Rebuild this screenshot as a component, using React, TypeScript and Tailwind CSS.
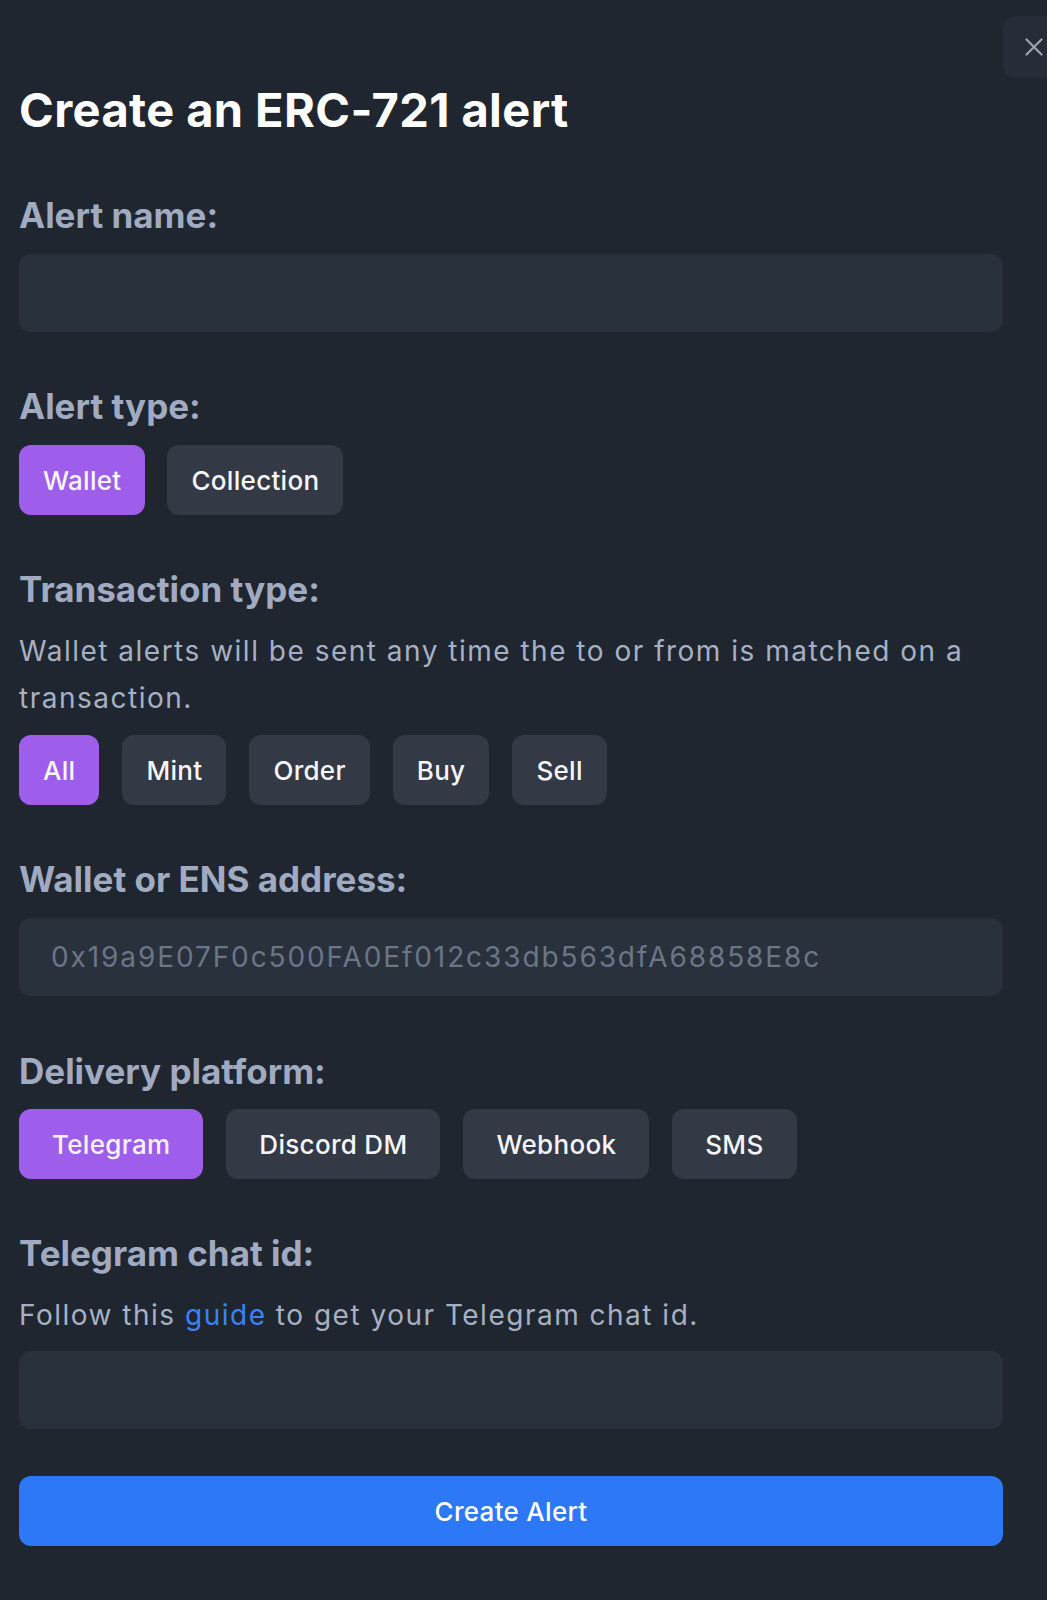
const font = { fontFamily: "Inter, 'Noto Sans', sans-serif" };

function Choice({ label, active, wide }: { label: string; active?: boolean; wide?: boolean }) {
  return (
    <button
      className={
        "h-[70px] rounded-xl text-[26px] font-medium tracking-[0.3px] text-[#f5f5fa] " +
        (wide ? "px-[33px] " : "px-6 ") +
        (active ? "bg-[#9f5dec]" : "bg-[#343a45]")
      }
    >
      {label}
    </button>
  );
}

function Label({ children, mb = "mb-[18px]" }: { children: React.ReactNode; mb?: string }) {
  return (
    <div className={"text-[35px] leading-[42px] font-bold text-[#a0aac1] " + mb}>
      {children}
    </div>
  );
}

function Field({ placeholder }: { placeholder?: string }) {
  return (
    <input
      placeholder={placeholder}
      className="block w-full h-[78px] rounded-xl bg-[#29313d] px-8 text-[28px] tracking-[1.9px] text-[#e2e8f0] placeholder:text-[#6c7585] outline-none"
    />
  );
}

export default function App() {
  return (
    <div className="min-h-[1600px] bg-[#1f2630] relative overflow-hidden" style={font}>
      <button className="absolute left-[1003px] top-4 w-[62px] h-[62px] rounded-xl bg-[#262d38] flex items-center pl-[22px]">
        <svg width="18" height="18" viewBox="0 0 18 18" fill="none" stroke="#9aa3b3" strokeWidth="2.2" strokeLinecap="round">
          <path d="M1.5 1.5 16.5 16.5M16.5 1.5 1.5 16.5" />
        </svg>
      </button>

      <div className="w-[984px] ml-[19px] pt-[82px] pb-12">
        <h1 className="text-[47px] leading-[56px] font-bold text-white tracking-[0.4px]">
          Create an ERC-721 alert
        </h1>

        <div className="mt-[56px]">
          <Label>Alert name:</Label>
          <Field />
        </div>

        <div className="mt-[53px]">
          <Label>Alert type:</Label>
          <div className="flex gap-[22px]">
            <Choice label="Wallet" active />
            <Choice label="Collection" />
          </div>
        </div>

        <div className="mt-[53px]">
          <Label>Transaction type:</Label>
          <p className="text-[28px] leading-[47px] tracking-[1.5px] text-[#a7b0c3] mb-[13px]">
            Wallet alerts will be sent any time the to or from is matched on a transaction.
          </p>
          <div className="flex gap-[23px]">
            <Choice label="All" active />
            <Choice label="Mint" />
            <Choice label="Order" />
            <Choice label="Buy" />
            <Choice label="Sell" />
          </div>
        </div>

        <div className="mt-[53px]">
          <Label>Wallet or ENS address:</Label>
          <Field placeholder="0x19a9E07F0c500FA0Ef012c33db563dfA68858E8c" />
        </div>

        <div className="mt-[54px]">
          <Label mb="mb-[17px]">Delivery platform:</Label>
          <div className="flex gap-[23px]">
            <Choice label="Telegram" active wide />
            <Choice label="Discord DM" wide />
            <Choice label="Webhook" wide />
            <Choice label="SMS" wide />
          </div>
        </div>

        <div className="mt-[53px]">
          <Label>Telegram chat id:</Label>
          <p className="text-[28px] leading-[47px] tracking-[1.5px] text-[#a7b0c3] mb-[12px]">
            Follow this <a className="text-[#3a82f6]">guide</a> to get your Telegram chat id.
          </p>
          <Field />
        </div>

        <button className="mt-[47px] w-full h-[70px] rounded-xl bg-[#2c78f6] text-[26px] font-medium tracking-[0.3px] text-white">
          Create Alert
        </button>
      </div>
    </div>
  );
}
